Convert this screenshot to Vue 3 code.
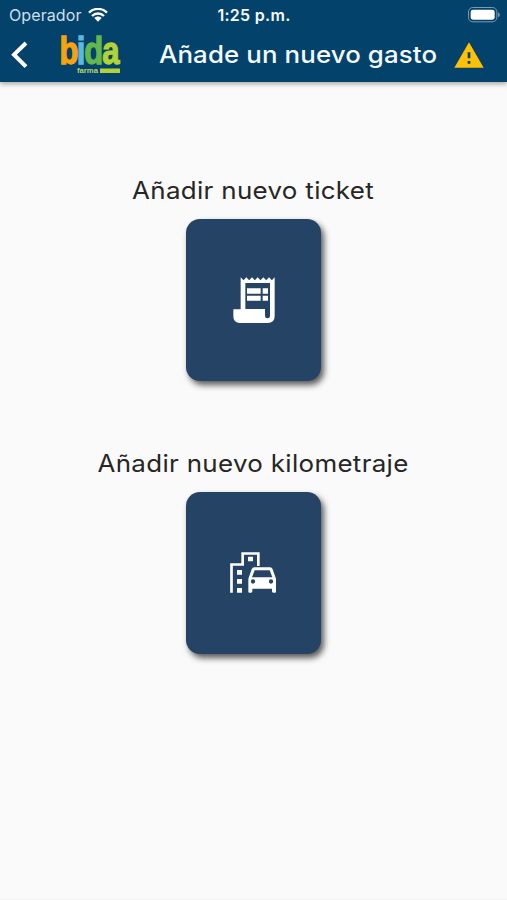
<script setup>
const options = [
  { id: 'ticket', label: 'Añadir nuevo ticket' },
  { id: 'mileage', label: 'Añadir nuevo kilometraje' },
]
</script>

<template>
  <div class="screen">
    <header class="header">
      <div class="status">
        <div class="carrier">
          <span class="carrier-name">Operador</span>
          <svg class="wifi" viewBox="0 0 60 42" aria-hidden="true">
            <path d="M3 14C18-1 42-1 57 14" />
            <path d="M12 24C22 14 38 14 48 24" />
            <path class="dot" d="M19 30C25 24 35 24 41 30L30 41Z" />
          </svg>
        </div>
        <span class="time">1:25 p.m.</span>
        <div class="battery-wrap">
          <svg class="battery" viewBox="0 0 96 48" aria-hidden="true">
            <rect class="shell" x="1.5" y="1.5" width="85" height="43" rx="13" />
            <rect class="charge" x="8" y="8" width="72" height="30" rx="7" />
            <path class="charge-tip" d="M90 16C97 19 97 28 90 31Z" />
          </svg>
        </div>
      </div>
      <div class="bar">
        <svg class="back" viewBox="0 0 60 84" aria-label="Volver">
          <path d="M48 6L12 41L48 77" />
        </svg>
        <svg class="logo" viewBox="0 0 62 42" aria-label="bida farma">
          <text class="word" x="-0.5" y="30" textLength="60" lengthAdjust="spacingAndGlyphs"><tspan class="b">b</tspan><tspan class="i" dx="-2">i</tspan><tspan class="d" dx="-1.5">d</tspan><tspan class="a" dx="-1">a</tspan></text>
          <text class="sub" x="17" y="39" textLength="21" lengthAdjust="spacingAndGlyphs">farma</text>
          <rect class="rule" x="40" y="34.5" width="20" height="4.5" />
        </svg>
        <h1 class="title">Añade un nuevo gasto</h1>
        <svg class="warning" viewBox="0 0 90 78" aria-label="Aviso">
          <path class="tri" d="M45 1L89 77H1Z" />
          <path class="mark" d="M41 31H49V49H41ZM41 57H49V65H41Z" />
        </svg>
      </div>
    </header>

    <main class="content">
      <section v-for="o in options" :key="o.id" class="option">
        <h2 class="label">{{ o.label }}</h2>
        <button class="card" :class="o.id" :aria-label="o.label">
          <svg v-if="o.id === 'ticket'" class="glyph" viewBox="0 0 240 240">
            <path
              fill-rule="evenodd"
              d="M77 52L85.5 61L94 52L102.5 61L111 52L119.5 61L128 52L136.5 61L145 52L153.5 61L162 52L170.5 61L179 52V168Q179 189 158 189H75Q55 189 55 168V148H77ZM91 69V147H150V168Q150 175 157.500 175Q165 175 165 168V69Z"
            />
            <path d="M96 85H137V101H96ZM143 85H159V101H143ZM96 107H137V122H96ZM143 107H159V122H143Z" />
          </svg>
          <svg v-else class="glyph" viewBox="0 0 240 240">
            <path class="outline" d="M52.500 173V88.500H86V55.500H133V93" />
            <path d="M102 65H117V79H102ZM69 105H84V119H69ZM69 132H84V146H69ZM69 159H84V173H69Z" />
            <path
              fill-rule="evenodd"
              d="M121 97H168Q174 97 176 103L186 131V170Q186 173 183 173H178Q174 173 174 169V161H115V169Q115 173 111 173H106Q103 173 103 170V131L113 103Q115 97 121 97ZM122 106L114 127H175L167 106ZM117 133A6.500 6.500 0 1 0 117 146A6.500 6.500 0 1 0 117 133ZM171 133A6.500 6.500 0 1 0 171 146A6.500 6.500 0 1 0 171 133Z"
            />
          </svg>
        </button>
      </section>
    </main>
  </div>
</template>

<style>
body {
  margin: 0;
  background: #fafafa;
}
</style>

<style scoped>
.screen {
  display: flex;
  flex-direction: column;
  box-sizing: border-box;
  height: 900px;
  background: #fafafa;
  border-bottom: 1px solid #f1f1f1;
  font-family: Inter, "Liberation Sans", sans-serif;
}
.header {
  height: 82px;
  flex: none;
  background: #02426b;
  color: #f4faff;
  box-shadow: 0 2px 5px rgba(0, 0, 0, 0.34);
}
.status {
  display: grid;
  grid-template-columns: 1fr auto 1fr;
  align-items: center;
  height: 29px;
  padding: 0 8px 0 9px;
}
.carrier {
  display: flex;
  align-items: center;
  gap: 6px;
}
.carrier-name {
  font-size: 16px;
  line-height: 20px;
  letter-spacing: 0.1px;
  color: #cfdfea;
}
.wifi {
  width: 20px;
  height: 14px;
  fill: none;
  stroke: #fff;
  stroke-width: 7;
}
.wifi .dot {
  fill: #fff;
  stroke: none;
}
.time {
  font-size: 16px;
  line-height: 20px;
  font-weight: 600;
  letter-spacing: 0.3px;
}
.battery-wrap {
  display: flex;
  justify-content: flex-end;
}
.battery {
  width: 32px;
  height: 16px;
  margin-right: -1px;
}
.shell {
  fill: none;
  stroke: #7c9bb1;
  stroke-width: 3;
}
.charge {
  fill: #fff;
}
.charge-tip {
  fill: #7c9bb1;
}
.bar {
  display: flex;
  align-items: center;
  height: 51px;
  padding-left: 10px;
}
.back {
  width: 20px;
  height: 28px;
  fill: none;
  stroke: #fff;
  stroke-width: 12;
}
.logo {
  width: 62px;
  height: 42px;
  margin-left: 30px;
  overflow: visible;
}
.word {
  font: 700 38px "Liberation Sans", sans-serif;
  stroke-width: 1.3px;
}
.b {
  fill: #f7a30c;
  stroke: #f7a30c;
}
.i {
  fill: #5ab9e0;
  stroke: #5ab9e0;
}
.d {
  fill: #64b64e;
  stroke: #64b64e;
}
.a {
  fill: #b2d235;
  stroke: #b2d235;
}
.sub {
  font: 700 8px "Liberation Sans", sans-serif;
  fill: #b8d66a;
}
.rule {
  fill: #b2d235;
}
.title {
  width: 278px;
  margin: 0 0 0 37px;
  font-size: 24px;
  line-height: 32px;
  font-weight: 500;
  letter-spacing: 0.1px;
  white-space: nowrap;
  transform: scaleX(1.077);
  transform-origin: left center;
}
.warning {
  width: 30px;
  height: 26px;
  margin-left: 17px;
}
.tri {
  fill: #ffc107;
}
.mark {
  fill: #02426b;
}
.content {
  display: flex;
  flex-direction: column;
  align-items: center;
  gap: 64.5px;
  padding: 91px 0 0;
}
.option {
  display: flex;
  flex-direction: column;
  align-items: center;
}
.label {
  margin: 0 0 11px;
  height: 35px;
  font-size: 24px;
  line-height: 35px;
  font-weight: 400;
  letter-spacing: 0.3px;
  color: #262626;
  white-space: nowrap;
  transform: scaleX(1.08);
}
.card {
  display: flex;
  align-items: flex-start;
  justify-content: center;
  box-sizing: border-box;
  width: 135px;
  height: 162px;
  padding: 41px 0 0 2px;
  border: 0;
  border-radius: 14px;
  background: #254365;
  box-shadow: 3px 4px 6px rgba(0, 0, 0, 0.65);
}
.mileage {
  padding-top: 43px;
}
.glyph {
  flex: none;
  width: 80px;
  height: 80px;
  fill: #fff;
}
.outline {
  fill: none;
  stroke: #fff;
  stroke-width: 8;
}
</style>
